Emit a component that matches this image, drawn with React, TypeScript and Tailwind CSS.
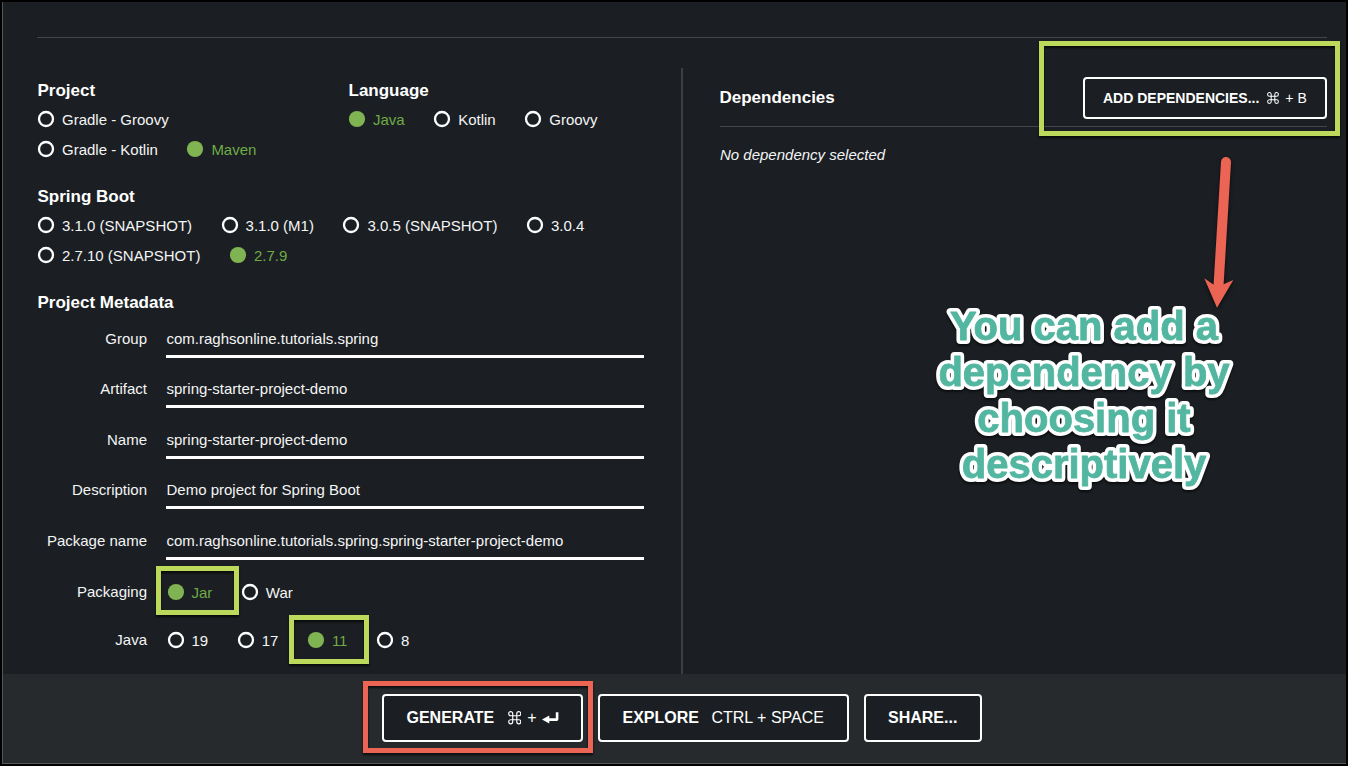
import React from "react";

type Option = { label: string; active?: boolean };

function Radio({ label, active }: Option) {
  return (
    <label className={`flex h-[30px] items-center gap-2 ${active ? "text-[#6fab46]" : "text-[#f4f5f5]"}`}>
      <svg viewBox="0 0 16 16" className="size-4 shrink-0 overflow-visible">
        {active ? (
          <circle cx="8" cy="8" r="8.1" fill="#80b351" />
        ) : (
          <circle cx="8" cy="8" r="7" fill="none" stroke="#ffffff" strokeWidth="2.3" />
        )}
      </svg>
      <span className="whitespace-nowrap pt-0.5 leading-[18px]">{label}</span>
    </label>
  );
}

function RadioRow({ options }: { options: Option[] }) {
  return (
    <div className="flex gap-[29.5px]">
      {options.map((o) => (
        <Radio key={o.label} {...o} />
      ))}
    </div>
  );
}

function Section({ title, rows, className = "" }: { title: string; rows: Option[][]; className?: string }) {
  return (
    <section className={className}>
      <h2 className="h-[26px] pl-[0.5px] text-[17px] font-bold leading-[26px] text-white">{title}</h2>
      <div className="pl-px">
        {rows.map((r, i) => (
          <RadioRow key={i} options={r} />
        ))}
      </div>
    </section>
  );
}

function Field({ label, value }: { label: string; value: string }) {
  return (
    <div className="flex h-[50.4px] items-start">
      <span className="w-[110px] pt-[9px] text-right leading-[20px]">{label}</span>
      <div className="ml-[19px] h-[38px] w-[478px] border-b-[3px] border-white pl-[0.5px] pt-[9px] leading-[20px]">
        {value}
      </div>
    </div>
  );
}

function CommandIcon({ className }: { className: string }) {
  return (
    <svg viewBox="2 2 20 20" className={className} fill="none" stroke="currentColor" strokeWidth="1.7">
      <path d="M15 6v12a3 3 0 1 0 3-3H6a3 3 0 1 0 3 3V6a3 3 0 1 0-3 3h12a3 3 0 1 0-3-3" />
    </svg>
  );
}

function EnterIcon() {
  return (
    <svg viewBox="0 0 17 12" className="h-3 w-[17px]">
      <path d="M0 7.5 7.3 3.6V6.2H13.8V0.3H16.4V7.2Q16.4 8.9 14.7 8.9H7.3V11.6Z" fill="currentColor" />
    </svg>
  );
}

const noteLines = ["You can add a", "dependency by", "choosing it", "descriptively"];

function NoteText({ className }: { className: string }) {
  return (
    <g className={className}>
      {noteLines.map((line, i) => (
        <text key={line} x="170" y={37 + i * 46} textAnchor="middle">
          {line}
        </text>
      ))}
    </g>
  );
}

const buttonClass = "flex items-center rounded-[4px] border-2 border-white bg-[#1b1f23] whitespace-nowrap text-white";

export default function App() {
  return (
    <div className="relative h-[766px] w-[1348px] overflow-hidden bg-black pt-[2px] pr-[2px] pl-[2px] font-['Liberation_Sans',Arial,sans-serif] text-[15px] text-[#f4f5f5]">
      <div className="flex h-[762px] flex-col border-b border-l border-[#55585a] bg-[#1b1f23]">
        <div className="ml-[34px] mt-[35px] h-px w-[1290px] shrink-0 bg-[#43474a]" />
        <main className="mt-[30px] flex min-h-0 flex-1 pl-[34px]">
          <div className="w-[644px] pt-[10px]">
            <div className="flex">
              <Section
                className="w-[311px]"
                title="Project"
                rows={[
                  [{ label: "Gradle - Groovy" }],
                  [{ label: "Gradle - Kotlin" }, { label: "Maven", active: true }],
                ]}
              />
              <Section
                title="Language"
                rows={[[{ label: "Java", active: true }, { label: "Kotlin" }, { label: "Groovy" }]]}
              />
            </div>
            <Section
              className="mt-5"
              title="Spring Boot"
              rows={[
                [
                  { label: "3.1.0 (SNAPSHOT)" },
                  { label: "3.1.0 (M1)" },
                  { label: "3.0.5 (SNAPSHOT)" },
                  { label: "3.0.4" },
                ],
                [{ label: "2.7.10 (SNAPSHOT)" }, { label: "2.7.9", active: true }],
              ]}
            />
            <h2 className="mt-5 h-[26px] pl-[0.5px] text-[17px] font-bold leading-[26px] text-white">
              Project Metadata
            </h2>
            <div className="pt-[4px]">
              <Field label="Group" value="com.raghsonline.tutorials.spring" />
              <Field label="Artifact" value="spring-starter-project-demo" />
              <Field label="Name" value="spring-starter-project-demo" />
              <Field label="Description" value="Demo project for Spring Boot" />
              <Field label="Package name" value="com.raghsonline.tutorials.spring.spring-starter-project-demo" />
            </div>
            <div className="mt-[5px] flex h-[30px]">
              <span className="mr-[20.5px] w-[110px] text-right leading-[30px]">Packaging</span>
              <RadioRow options={[{ label: "Jar", active: true }, { label: "War" }]} />
            </div>
            <div className="mt-[18px] flex h-[30px]">
              <span className="mr-[20.5px] w-[110px] text-right leading-[30px]">Java</span>
              <RadioRow options={[{ label: "19" }, { label: "17" }, { label: "11", active: true }, { label: "8" }]} />
            </div>
          </div>
          <div className="w-[1.5px] bg-[#3b3f42]" />
          <div className="ml-[37px] w-[607px]">
            <div className="flex h-[59px] items-start justify-between border-b border-[#43474a]">
              <h2 className="pt-[17px] text-[17px] font-bold leading-[26px] text-white">Dependencies</h2>
              <button className={`${buttonClass} mt-[9px] h-[42px] w-[244px] justify-start pl-[18.5px] text-[14px]`}>
                <b>ADD DEPENDENCIES...</b>
                <CommandIcon className="ml-[8px] size-3" />
                <span className="ml-[6px]">+ B</span>
              </button>
            </div>
            <p className="pl-[0.5px] pt-[18px] italic leading-[20px]">No dependency selected</p>
          </div>
        </main>
        <footer className="flex h-[89px] shrink-0 items-start gap-[15px] bg-[#262a2d] pl-[379px] pt-[20px] text-[16px]">
          <button className={`${buttonClass} h-[48px] w-[201px] pl-[22.5px]`}>
            <b>GENERATE</b>
            <CommandIcon className="ml-[13.5px] size-[13.5px]" />
            <span className="ml-[6px] mr-[5.5px]">+</span>
            <EnterIcon />
          </button>
          <button className={`${buttonClass} h-[48px] w-[251px] pl-[22.5px]`}>
            <b>EXPLORE</b>
            <span className="ml-[12.5px]">CTRL + SPACE</span>
          </button>
          <button className={`${buttonClass} h-[48px] w-[118px] pl-[22px]`}>
            <b>SHARE...</b>
          </button>
        </footer>
      </div>

      <div className="absolute left-[1039px] top-[41px] h-[95px] w-[301px] border-[5px] border-[#bdd95c] drop-shadow-[0_2px_1px_rgba(0,0,0,0.7)]" />
      <div className="absolute left-[156px] top-[566px] h-[49px] w-[83px] border-[5px] border-[#bdd95c] drop-shadow-[0_2px_1px_rgba(0,0,0,0.7)]" />
      <div className="absolute left-[289px] top-[615px] h-[49px] w-[80px] border-[5px] border-[#bdd95c] drop-shadow-[0_2px_1px_rgba(0,0,0,0.7)]" />
      <div className="absolute left-[363px] top-[681px] h-[72px] w-[230px] border-[5px] border-[#ec6453] drop-shadow-[0_2px_1px_rgba(0,0,0,0.7)]" />

      <svg
        viewBox="0 0 80 180"
        className="absolute left-[1180px] top-[140px] h-[180px] w-20 drop-shadow-[0_2px_2px_rgba(0,0,0,0.6)]"
      >
        <path d="M46 22 38.5 146" stroke="#ec6453" strokeWidth="10" strokeLinecap="round" />
        <path d="M24.3 138.3 33.3 144.5H43L53.3 140 37 167.7Z" fill="#ec6453" />
      </svg>

      <svg
        viewBox="0 0 340 200"
        strokeLinejoin="round"
        className="absolute left-[914px] top-[303px] h-[200px] w-[340px] text-[40px] font-bold drop-shadow-[0_2px_1px_rgba(0,0,0,0.6)]"
      >
        <NoteText className="fill-white stroke-white stroke-[8px]" />
        <NoteText className="fill-[#52b6a0] stroke-[#52b6a0] stroke-[0.8px]" />
      </svg>
    </div>
  );
}
